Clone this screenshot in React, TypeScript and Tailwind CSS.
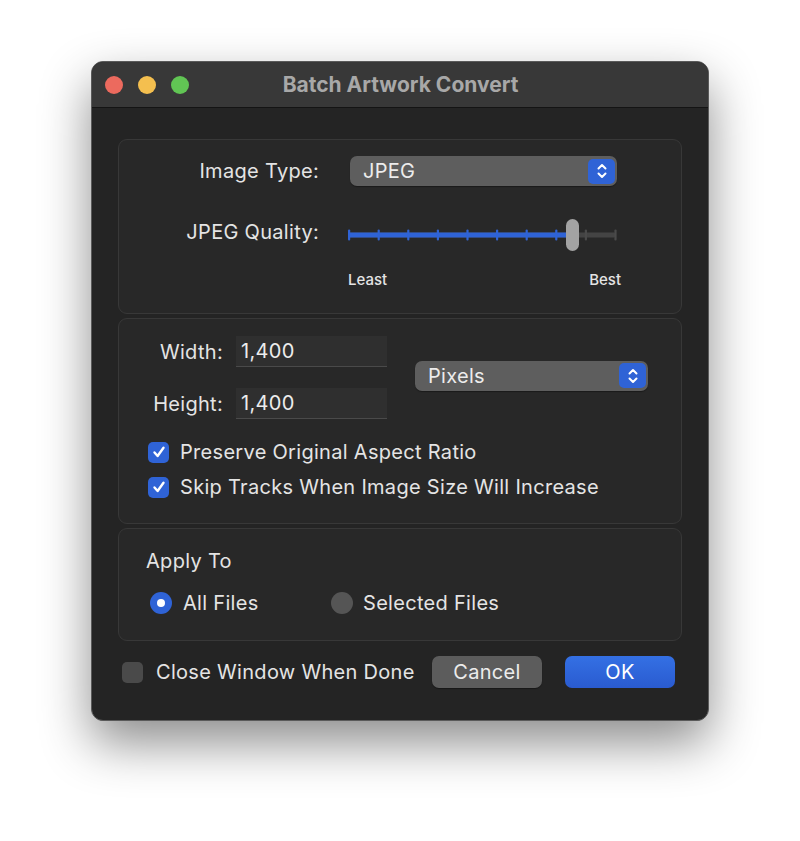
import { useState } from 'react'

const font = { fontFamily: 'Inter, "Noto Sans", sans-serif' }
const txt = 'text-[20px] leading-[24px] tracking-[0.3px] text-[#e4e4e4]'

function Stepper() {
  return (
    <span className="flex h-[25px] w-[27px] items-center justify-center rounded-[5px] bg-[#2f63d6]">
      <svg width="12" height="18" viewBox="0 0 12 18" fill="none" stroke="#fff" strokeWidth="2" strokeLinecap="round" strokeLinejoin="round">
        <path d="M2.5 6.5 6 3l3.5 3.5" />
        <path d="M2.5 11.5 6 15l3.5-3.5" />
      </svg>
    </span>
  )
}

function Popup({ label, width }: { label: string; width: string }) {
  return (
    <div className={'flex h-[30px] items-center justify-between rounded-[7px] bg-[#5e5e5e] pl-[13px] pr-[2px] shadow-[0_1px_1px_rgba(0,0,0,0.35)] ' + width}>
      <span className="text-[20px] leading-[24px] tracking-[0.3px] text-[#ececec]">{label}</span>
      <Stepper />
    </div>
  )
}

function Check({ on }: { on: boolean }) {
  return (
    <span className={'flex h-[21px] w-[21px] shrink-0 items-center justify-center rounded-[5px] ' + (on ? 'bg-[#2f63d6]' : 'bg-[#4a4a4a]')}>
      {on && (
        <svg width="14" height="14" viewBox="0 0 14 14" fill="none" stroke="#fff" strokeWidth="2.4" strokeLinecap="round" strokeLinejoin="round">
          <path d="M2.5 7.5 5.6 11 11.5 2.8" />
        </svg>
      )}
    </span>
  )
}

function Radio({ on }: { on: boolean }) {
  return (
    <span className={'flex h-[22px] w-[22px] items-center justify-center rounded-full ' + (on ? 'bg-[#2f63d6]' : 'bg-[#555555]')}>
      {on && <span className="h-[8px] w-[8px] rounded-full bg-white" />}
    </span>
  )
}

function Slider() {
  const ticks = Array.from({ length: 10 }, (_, i) => 2 + i * 29.6)
  return (
    <svg width="276" height="36" viewBox="0 0 276 36">
      <rect x="2" y="15.5" width="266" height="5" rx="1" fill="#444444" />
      <rect x="2" y="15.5" width="224" height="5" rx="1" fill="#2f63d6" />
      {ticks.map((t) => (
        <rect key={t} x={t - 1} y="12.5" width="2.2" height="11" rx="1" fill={t < 226 ? '#2f63d6' : '#4a4a4a'} />
      ))}
      <rect x="219" y="2" width="13" height="32" rx="6.5" fill="#a3a3a3" />
    </svg>
  )
}

function Field({ value }: { value: string }) {
  return (
    <div className="flex h-[31px] w-[151px] items-center border-b border-[#4a4a4a] bg-[#2f2f2f] pl-[5px] text-[20px] leading-[24px] tracking-[0.3px] text-[#ececec]">
      {value}
    </div>
  )
}

export default function App() {
  const [aspect, setAspect] = useState(true)
  const [skip, setSkip] = useState(true)
  const [all, setAll] = useState(true)
  const [close, setClose] = useState(false)

  return (
    <div className="h-[841px] w-[800px] bg-white pl-[91px] pt-[61px]" style={font}>
      <div className="h-[660px] w-[618px] overflow-hidden rounded-[12px] border border-[#5a5a5a] bg-[#242424] shadow-[0_22px_50px_rgba(0,0,0,0.45)]">
        {/* title bar */}
        <div className="flex h-[46px] items-center border-b border-[#141414] bg-[#383838]">
          <div className="flex gap-[15px] pl-[13px]">
            <span className="h-[18px] w-[18px] rounded-full bg-[#ec6a5e]" />
            <span className="h-[18px] w-[18px] rounded-full bg-[#f4bf4f]" />
            <span className="h-[18px] w-[18px] rounded-full bg-[#61c554]" />
          </div>
          <span className="flex-1 pr-[96px] text-center text-[21px] font-bold text-[#a8a8a8]">Batch Artwork Convert</span>
        </div>

        <div className="flex flex-col gap-[4px] pl-[26px] pt-[31px]">
          {/* group 1 */}
          <div className="h-[175px] w-[564px] rounded-[9px] border border-[#383838] bg-[#282828]">
            <div className="mt-[16px] flex items-center">
              <span className={'w-[200px] text-right ' + txt}>Image Type:</span>
              <div className="ml-[31px]"><Popup label="JPEG" width="w-[267px]" /></div>
            </div>
            <div className="mt-[25px] flex items-center">
              <span className={'w-[200px] text-right ' + txt}>JPEG Quality:</span>
              <div className="ml-[28px] mt-[6px]"><Slider /></div>
            </div>
            <div className="ml-[229px] mt-[16px] flex w-[273px] justify-between text-[15px] font-medium text-[#e4e4e4]">
              <span>Least</span>
              <span>Best</span>
            </div>
          </div>

          {/* group 2 */}
          <div className="h-[206px] w-[564px] rounded-[9px] border border-[#383838] bg-[#282828]">
            <div className="mt-[17px] flex items-center">
              <div className="grid grid-cols-[104px_151px] items-center gap-x-[13px] gap-y-[21px]">
                <span className={'text-right ' + txt}>Width:</span>
                <Field value="1,400" />
                <span className={'text-right ' + txt}>Height:</span>
                <Field value="1,400" />
              </div>
              <div className="mb-[4px] ml-[28px]"><Popup label="Pixels" width="w-[233px]" /></div>
            </div>
            <div className="ml-[29px] mt-[21px] flex flex-col gap-[11px]">
              <label className="flex cursor-default items-center gap-[11px]" onClick={() => setAspect((v) => !v)}>
                <Check on={aspect} />
                <span className={txt}>Preserve Original Aspect Ratio</span>
              </label>
              <label className="flex cursor-default items-center gap-[11px]" onClick={() => setSkip((v) => !v)}>
                <Check on={skip} />
                <span className={txt}>Skip Tracks When Image Size Will Increase</span>
              </label>
            </div>
          </div>

          {/* group 3 */}
          <div className="h-[113px] w-[564px] rounded-[9px] border border-[#383838] bg-[#282828]">
            <div className={'ml-[27px] mt-[20px] ' + txt}>Apply To</div>
            <div className="ml-[31px] mt-[18px] flex items-center">
              <label className="flex w-[181px] items-center gap-[11px]" onClick={() => setAll(true)}>
                <Radio on={all} />
                <span className={txt}>All Files</span>
              </label>
              <label className="flex items-center gap-[10px]" onClick={() => setAll(false)}>
                <Radio on={!all} />
                <span className={txt}>Selected Files</span>
              </label>
            </div>
          </div>

          {/* bottom row */}
          <div className="mt-[11px] flex items-center">
            <label className="ml-[4px] flex w-[310px] items-center gap-[13px]" onClick={() => setClose((v) => !v)}>
              <Check on={close} />
              <span className={txt}>Close Window When Done</span>
            </label>
            <button type="button" className="h-[32px] w-[110px] rounded-[7px] bg-[#5c5c5c] text-[20px] tracking-[0.3px] text-[#ececec] shadow-[0_1px_1px_rgba(0,0,0,0.35)]">
              Cancel
            </button>
            <button type="button" className="ml-[23px] h-[32px] w-[110px] rounded-[7px] bg-gradient-to-b from-[#3470e4] to-[#2a5bd0] text-[20px] tracking-[0.3px] text-white">
              OK
            </button>
          </div>
        </div>
      </div>
    </div>
  )
}
